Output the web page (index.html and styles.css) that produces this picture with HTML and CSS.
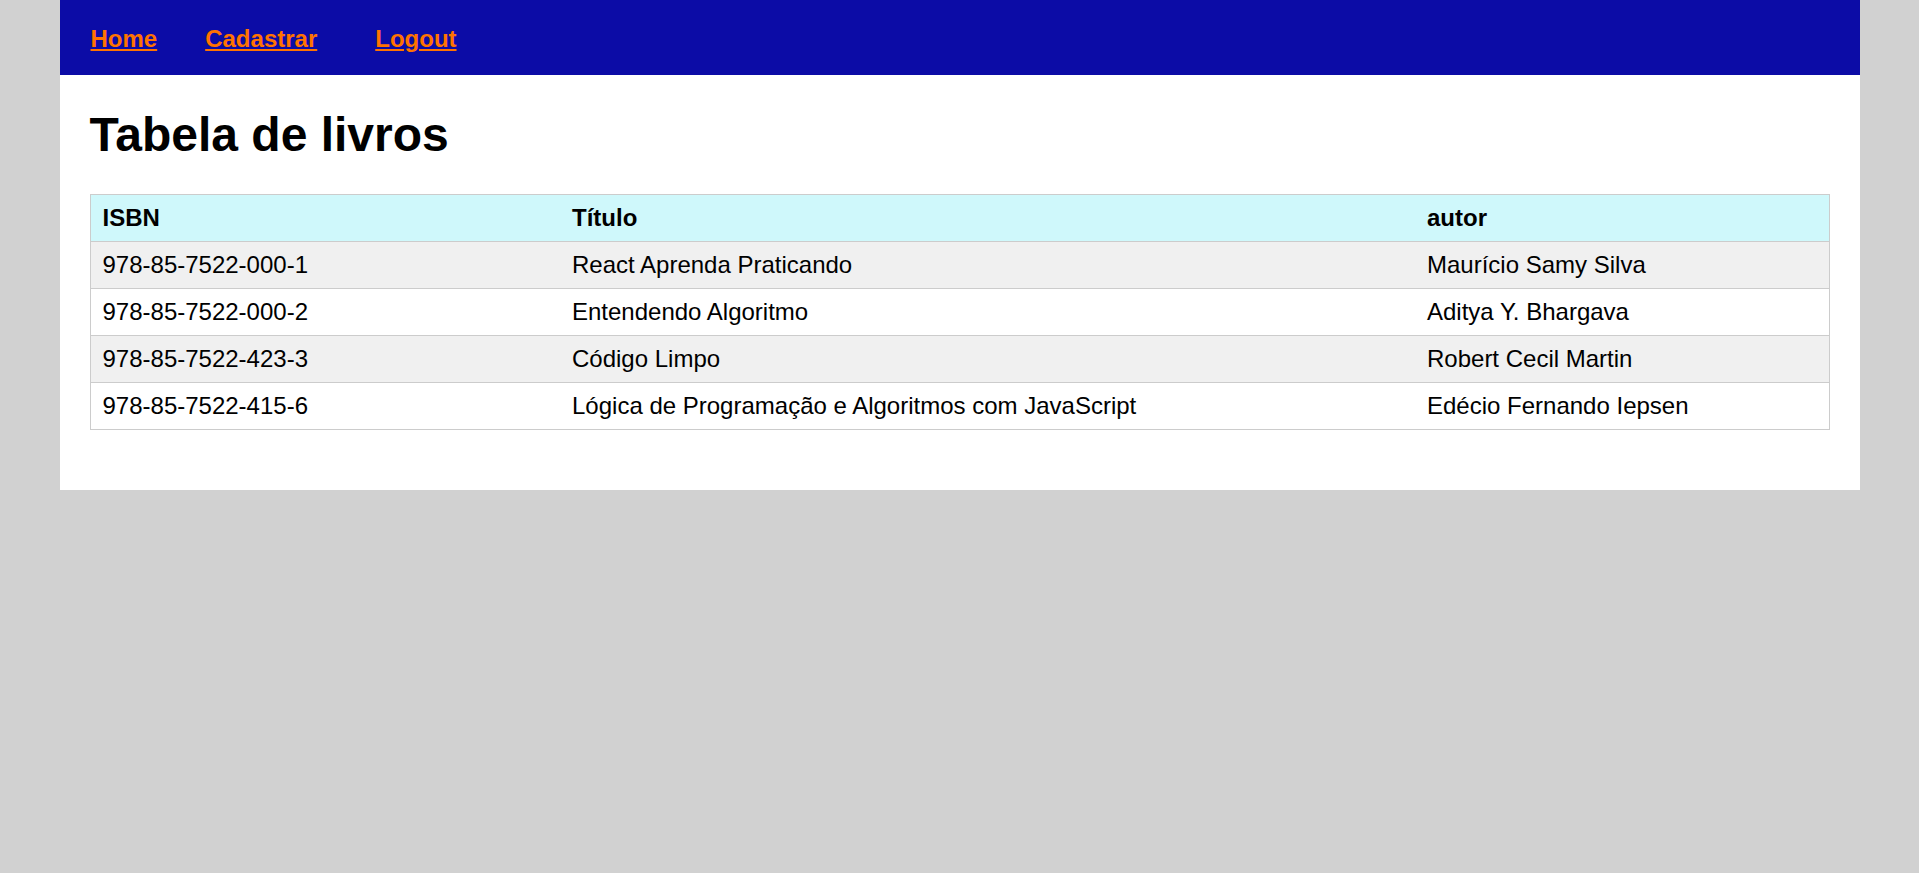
FILE: index.html
```html
<!DOCTYPE html>
<html lang="pt-BR">
<head>
<meta charset="utf-8">
<title>Tabela de livros</title>
<link rel="stylesheet" href="styles.css">
</head>
<body>
<div class="page">
  <nav class="topnav">
    <a href="#" class="nav-link">Home</a>
    <a href="#" class="nav-link">Cadastrar</a>
    <a href="#" class="nav-link nav-logout">Logout</a>
  </nav>
  <main class="content">
    <h1 class="title">Tabela de livros</h1>
    <table class="books">
      <colgroup>
        <col class="col-isbn">
        <col class="col-titulo">
        <col class="col-autor">
      </colgroup>
      <thead>
        <tr><th>ISBN</th><th>Título</th><th>autor</th></tr>
      </thead>
      <tbody>
        <tr><td>978-85-7522-000-1</td><td>React Aprenda Praticando</td><td>Maurício Samy Silva</td></tr>
        <tr><td>978-85-7522-000-2</td><td>Entendendo Algoritmo</td><td>Aditya Y. Bhargava</td></tr>
        <tr><td>978-85-7522-423-3</td><td>Código Limpo</td><td>Robert Cecil Martin</td></tr>
        <tr><td>978-85-7522-415-6</td><td>Lógica de Programação e Algoritmos com JavaScript</td><td>Edécio Fernando Iepsen</td></tr>
      </tbody>
    </table>
  </main>
</div>
</body>
</html>
```
FILE: styles.css
```css
html, body {
  margin: 0;
  padding: 0;
}
body {
  background: #d1d1d1;
  font-family: "Liberation Sans", Arial, sans-serif;
  color: #000;
}
.page {
  width: 1800px;
  margin: 0 auto;
  background: #fff;
}
.topnav {
  height: 75px;
  background: #0c0ca6;
  display: flex;
  align-items: center;
  gap: 48px;
  padding: 0 31px;
  box-sizing: border-box;
}
.nav-link {
  color: #ff7300;
  font-weight: bold;
  font-size: 24px;
  line-height: 28px;
  text-decoration: underline;
  margin-top: 3px;
}
.nav-logout {
  margin-left: 10px;
}
.content {
  padding: 0 30px 60px;
  overflow: hidden;
}
.title {
  font-size: 48px;
  line-height: 55px;
  font-weight: bold;
  margin: 32px 0 32px;
}
.books {
  width: 100%;
  border-collapse: collapse;
  table-layout: fixed;
  border: 1px solid #cccccc;
  font-size: 24px;
}
.col-isbn { width: 470px; }
.col-titulo { width: 855px; }
.books th,
.books td {
  text-align: left;
  padding: 9px 12px;
  line-height: 28px;
  border-bottom: 1px solid #cccccc;
}
.books th {
  background: #cff8fb;
  font-weight: bold;
}
.books tbody tr:nth-child(odd) td {
  background: #f0f0f0;
}
```
